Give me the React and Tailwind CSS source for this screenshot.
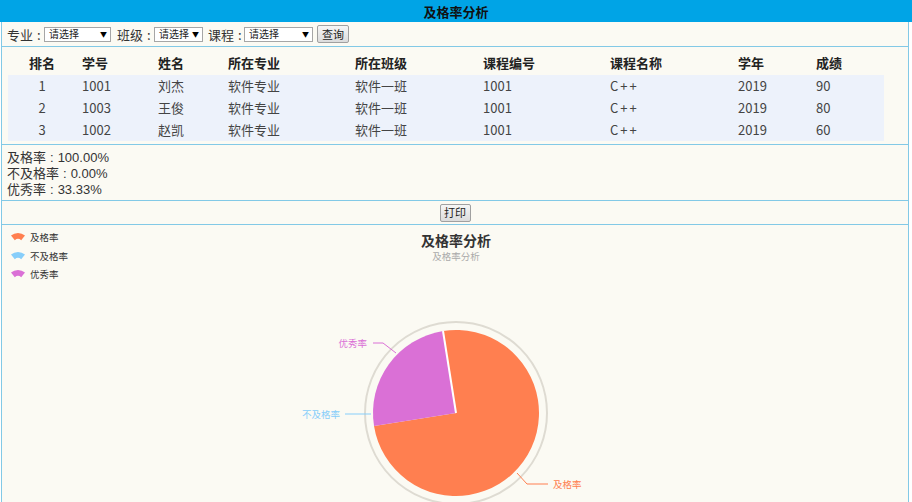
import React from "react";

const rows = [
  ["1", "1001", "刘杰", "软件专业", "软件一班", "1001", "C++", "2019", "90"],
  ["2", "1003", "王俊", "软件专业", "软件一班", "1001", "C++", "2019", "80"],
  ["3", "1002", "赵凯", "软件专业", "软件一班", "1001", "C++", "2019", "60"],
];
const heads = ["排名", "学号", "姓名", "所在专业", "所在班级", "课程编号", "课程名称", "学年", "成绩"];
const cols = "grid grid-cols-[68px_76px_70px_127px_128px_127px_128px_78px_74px]";

// colon with space each side, like the reference
const Colon = () => <span className="mx-[4px]">:</span>;

function Select({ w }) {
  return (
    <div className={`${w} shrink-0 h-[15px] bg-white border border-[#a6a6a6] flex items-center justify-between pl-[4px] pr-[3px]`}>
      <span className="text-[10px] leading-none text-[#222] whitespace-nowrap">请选择</span>
      <span className="text-[7px] leading-none text-black">▼</span>
    </div>
  );
}

function Btn({ children, w }) {
  return (
    <div className={`${w} shrink-0 h-[18px] flex items-center justify-center text-[11px] leading-none text-[#222] border border-[#a0a0a0] rounded-[2px] bg-gradient-to-b from-[#f6f6f6] to-[#dcdcdc]`}>
      {children}
    </div>
  );
}

// pie helpers: angle clockwise from 12 o'clock
const cx = 454, cy = 188, r = 83;
const pt = (deg, rad = r) => {
  const a = (deg * Math.PI) / 180;
  return [cx + rad * Math.sin(a), cy - rad * Math.cos(a)];
};
const slice = (a0, a1) => {
  const [x0, y0] = pt(a0);
  const [x1, y1] = pt(a1);
  const large = a1 - a0 > 180 ? 1 : 0;
  return `M${cx} ${cy} L${x0} ${y0} A${r} ${r} 0 ${large} 1 ${x1} ${y1} Z`;
};

function LegendIcon({ x, y, color }) {
  return (
    <g transform={`translate(${x},${y})`}>
      <path d="M0 2.6 A11 11 0 0 1 14 2.6 L10.2 7.2 A5 5 0 0 0 3.8 7.2 Z" fill={color} />
    </g>
  );
}

function Chart() {
  const [gx, gy] = pt(-9);
  return (
    <svg width="906" height="278" className="block">
      <text x="454" y="15" textAnchor="middle" dominantBaseline="central" fontSize="14" fontWeight="700" fill="#333">
        及格率分析
      </text>
      <text x="454" y="31" textAnchor="middle" dominantBaseline="central" fontSize="9.5" fill="#aaa">
        及格率分析
      </text>

      <LegendIcon x={9} y={8} color="#ff7f50" />
      <text x="28" y="12" dominantBaseline="central" fontSize="9.5" fill="#333">及格率</text>
      <LegendIcon x={9} y={27} color="#87cefa" />
      <text x="28" y="31" dominantBaseline="central" fontSize="9.5" fill="#333">不及格率</text>
      <LegendIcon x={9} y={45} color="#da70d6" />
      <text x="28" y="49" dominantBaseline="central" fontSize="9.5" fill="#333">优秀率</text>

      <circle cx={cx} cy={cy} r="91" fill="none" stroke="#dedbd2" strokeWidth="2" />
      <path d={slice(-9, 261)} fill="#ff7f50" />
      <path d={slice(261, 351)} fill="#da70d6" />
      <line x1={cx} y1={cy} x2={gx} y2={gy} stroke="#fff" strokeWidth="2" />

      <polyline points="371,118 381,118 394,128" fill="none" stroke="#da70d6" strokeWidth="1" />
      <text x="365" y="118" textAnchor="end" dominantBaseline="central" fontSize="9.5" fill="#da70d6">优秀率</text>

      <polyline points="343,189 369,189" fill="none" stroke="#87cefa" strokeWidth="1" />
      <text x="338" y="189" textAnchor="end" dominantBaseline="central" fontSize="9.5" fill="#87cefa">不及格率</text>

      <polyline points="515,248 525,259 546,259" fill="none" stroke="#ff7f50" strokeWidth="1" />
      <text x="551" y="259" dominantBaseline="central" fontSize="9.5" fill="#ff7f50">及格率</text>
    </svg>
  );
}

export default function App() {
  return (
    <div className="w-[912px] h-[502px] overflow-hidden bg-white font-['Noto_Sans_CJK_SC',sans-serif]">
      <div className="h-[22px] bg-[#00a4e6] flex items-center justify-center">
        <span className="text-[13px] font-bold text-[#111] leading-none">及格率分析</span>
      </div>

      <div className="ml-[1px] w-[908px] border-x border-[#82c9e6] bg-[#fbfaf3]">
        <div className="h-[25px] flex items-center pl-[5px] text-[13px] text-[#333] border-b border-[#82c9e6]">
          <span className="w-[37px] shrink-0 whitespace-nowrap leading-none">专业<Colon /></span>
          <Select w="w-[67px]" />
          <span className="ml-[6px] w-[37px] shrink-0 whitespace-nowrap leading-none">班级<Colon /></span>
          <Select w="w-[49px]" />
          <span className="ml-[5px] w-[36px] shrink-0 whitespace-nowrap leading-none">课程<Colon /></span>
          <Select w="w-[69px]" />
          <div className="ml-[4px]">
            <Btn w="w-[32px]">查询</Btn>
          </div>
        </div>

        <div className="pl-[6px] pb-[3px] border-b border-[#82c9e6]">
          <div className={`${cols} h-[28px] pt-[4px] items-center text-[13px] font-bold text-[#222]`}>
            {heads.map((h, i) => (
              <div key={h} className={i === 0 ? "text-center" : "pl-[6px]"}>
                {h}
              </div>
            ))}
          </div>
          <div className="w-[876px] bg-[#edf2fb]">
            {rows.map((row) => (
              <div key={row[0]} className={`${cols} h-[22px] items-center text-[13px] text-[#444]`}>
                {row.map((c, i) => (
                  <div
                    key={i}
                    className={i === 0 ? "text-center" : i === 6 ? "pl-[6px] tracking-[2px]" : "pl-[6px]"}
                  >
                    {c}
                  </div>
                ))}
              </div>
            ))}
          </div>
        </div>

        <div className="h-[56px] pt-[5px] pl-[5px] text-[13px] leading-[16px] text-[#333] border-b border-[#82c9e6] font-['Liberation_Sans','Noto_Sans_CJK_SC',sans-serif]">
          <div className="h-[16px]">及格率<Colon />100.00%</div>
          <div className="h-[16px]">不及格率<Colon />0.00%</div>
          <div className="h-[16px]">优秀率<Colon />33.33%</div>
        </div>

        <div className="h-[24px] flex items-center justify-center border-b border-[#82c9e6]">
          <Btn w="w-[31px]">打印</Btn>
        </div>

        <Chart />
      </div>
    </div>
  );
}
